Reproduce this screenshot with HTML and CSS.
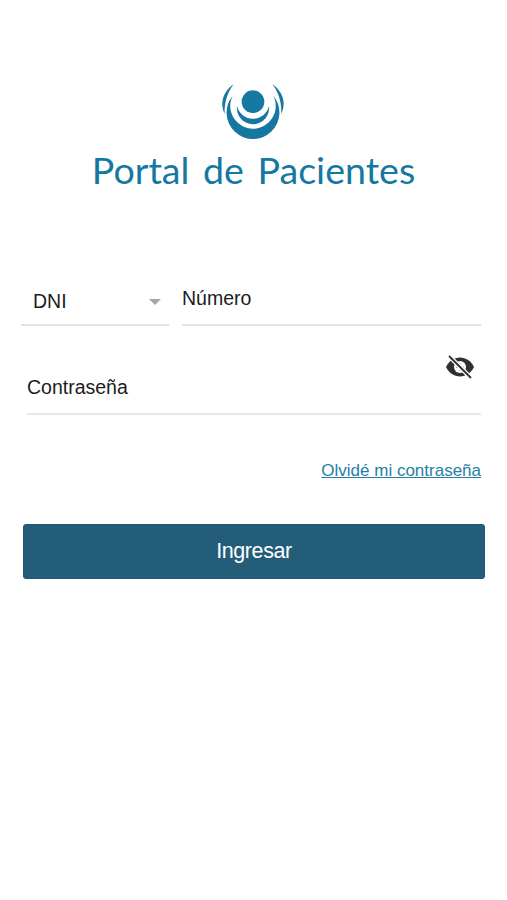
FILE: index.html
```html
<!DOCTYPE html>
<html lang="es">
<head>
  <meta charset="UTF-8">
  <meta name="viewport" content="width=device-width, initial-scale=1">
  <title>Portal de Pacientes</title>
  <link rel="stylesheet" href="styles.css">
</head>
<body>
  <header class="brand">
    <svg class="logo" viewBox="0 0 252 222" aria-hidden="true">
      <circle cx="123" cy="83" r="34"/>
      <path d="M75 96 A49.300 49.300 0 0 0 171 96 A48.400 48.400 0 1 1 75 96 Z"/>
      <path d="M62 65 A68.300 68.300 0 1 0 184 65 A79.300 79.300 0 1 1 62 65 Z"/>
      <path d="M65 30 C34 52 22 86 38 120 C37 90 43 60 65 30 Z"/>
      <path d="M181 30 C212 52 224 86 208 120 C209 90 203 60 181 30 Z"/>
    </svg>
    <h1>Portal de Pacientes</h1>
  </header>

  <form class="login">
    <div class="row">
      <button type="button" class="doc-type">
        <span>DNI</span>
        <svg class="arrow" viewBox="0 0 12 6"><path d="M0 0h12L6 6z"/></svg>
      </button>
      <input type="text" class="field number" placeholder="Número" aria-label="Número">
    </div>
    <div class="password">
      <input type="password" class="field" placeholder="Contraseña" aria-label="Contraseña">
      <button type="button" class="toggle" aria-label="Mostrar contraseña">
        <svg viewBox="0 0 28 24">
          <path d="M0 12 C3 6 8 2.500 14 2.500 S25 6 28 12 C25 18 20 21.500 14 21.500 S3 18 0 12 Z"/>
          <circle class="iris" cx="14" cy="12" r="6"/>
          <path class="shine" d="M10.500 13 C10.500 10 12 8.500 14.500 8.500 M13.500 15.500 C16 15.500 17.500 14 17.500 11.500"/>
          <path class="gap" d="M2 0 L26 24"/>
          <path class="slash" d="M3 1 L25 23"/>
        </svg>
      </button>
    </div>
    <a class="forgot" href="#">Olvidé mi contraseña</a>
    <button type="submit" class="submit">Ingresar</button>
  </form>
</body>
</html>
```

FILE: styles.css
```css
* {
  box-sizing: border-box;
}
body {
  margin: 0;
  background: #fff;
  color: #1c1c1c;
  font-family: "Liberation Sans", Arial, sans-serif;
}
.brand {
  display: flex;
  flex-direction: column;
  align-items: center;
  padding-top: 74px;
}
.logo {
  display: block;
  width: 84px;
  height: 74px;
  fill: #1578a0;
}
h1 {
  margin: 0;
  height: 46px;
  font-family: "Gill Sans", Lato, sans-serif;
  font-size: 37.6px;
  font-weight: 400;
  line-height: 44px;
  word-spacing: 4px;
  white-space: nowrap;
  color: #1578a0;
}
.login {
  display: flex;
  flex-direction: column;
  padding: 83px 22px 0 21px;
}
button, input {
  margin: 0;
  padding: 0;
  border: none;
  border-radius: 0;
  background: none;
  color: inherit;
  font-family: inherit;
  font-size: 19.5px;
}
.row {
  display: flex;
  gap: 13px;
  padding-right: 4px;
}
.doc-type {
  display: flex;
  align-items: center;
  justify-content: space-between;
  width: 148px;
  height: 49px;
  padding: 2px 8px 0 12px;
  border-bottom: 2px solid #e2e2e2;
}
.arrow {
  width: 12px;
  height: 6px;
  fill: #a5a5a5;
}
.field {
  display: block;
  width: 100%;
  height: 49px;
  padding-bottom: 5px;
  border-bottom: 2px solid #e2e2e2;
  outline: none;
}
.field::placeholder {
  color: #1c1c1c;
  opacity: 1;
}
.number {
  flex: 1;
  min-width: 0;
}
.password {
  position: relative;
  margin: 40px 4px 0 6px;
}
.password .field {
  border-color: #e8e8e8;
}
.toggle {
  position: absolute;
  top: -11px;
  right: 7px;
  width: 28px;
  height: 24px;
}
.toggle svg {
  display: block;
  fill: #303030;
}
.toggle .iris {
  fill: #fff;
}
.toggle .shine {
  fill: none;
  stroke: #999;
  stroke-width: 1;
}
.toggle .gap {
  stroke: #fff;
  stroke-width: 4.5;
}
.toggle .slash {
  stroke: #303030;
  stroke-width: 1.8;
}
.forgot {
  align-self: flex-end;
  margin: 46px 4px 0 0;
  font-size: 17px;
  line-height: 20px;
  color: #2580a5;
}
.submit {
  height: 55px;
  margin: 43px 0 0 2px;
  border: 1px solid #1d587a;
  border-radius: 3px;
  background: #235d7a;
  color: #fff;
  font-size: 21.5px;
  letter-spacing: -0.4px;
}
```
